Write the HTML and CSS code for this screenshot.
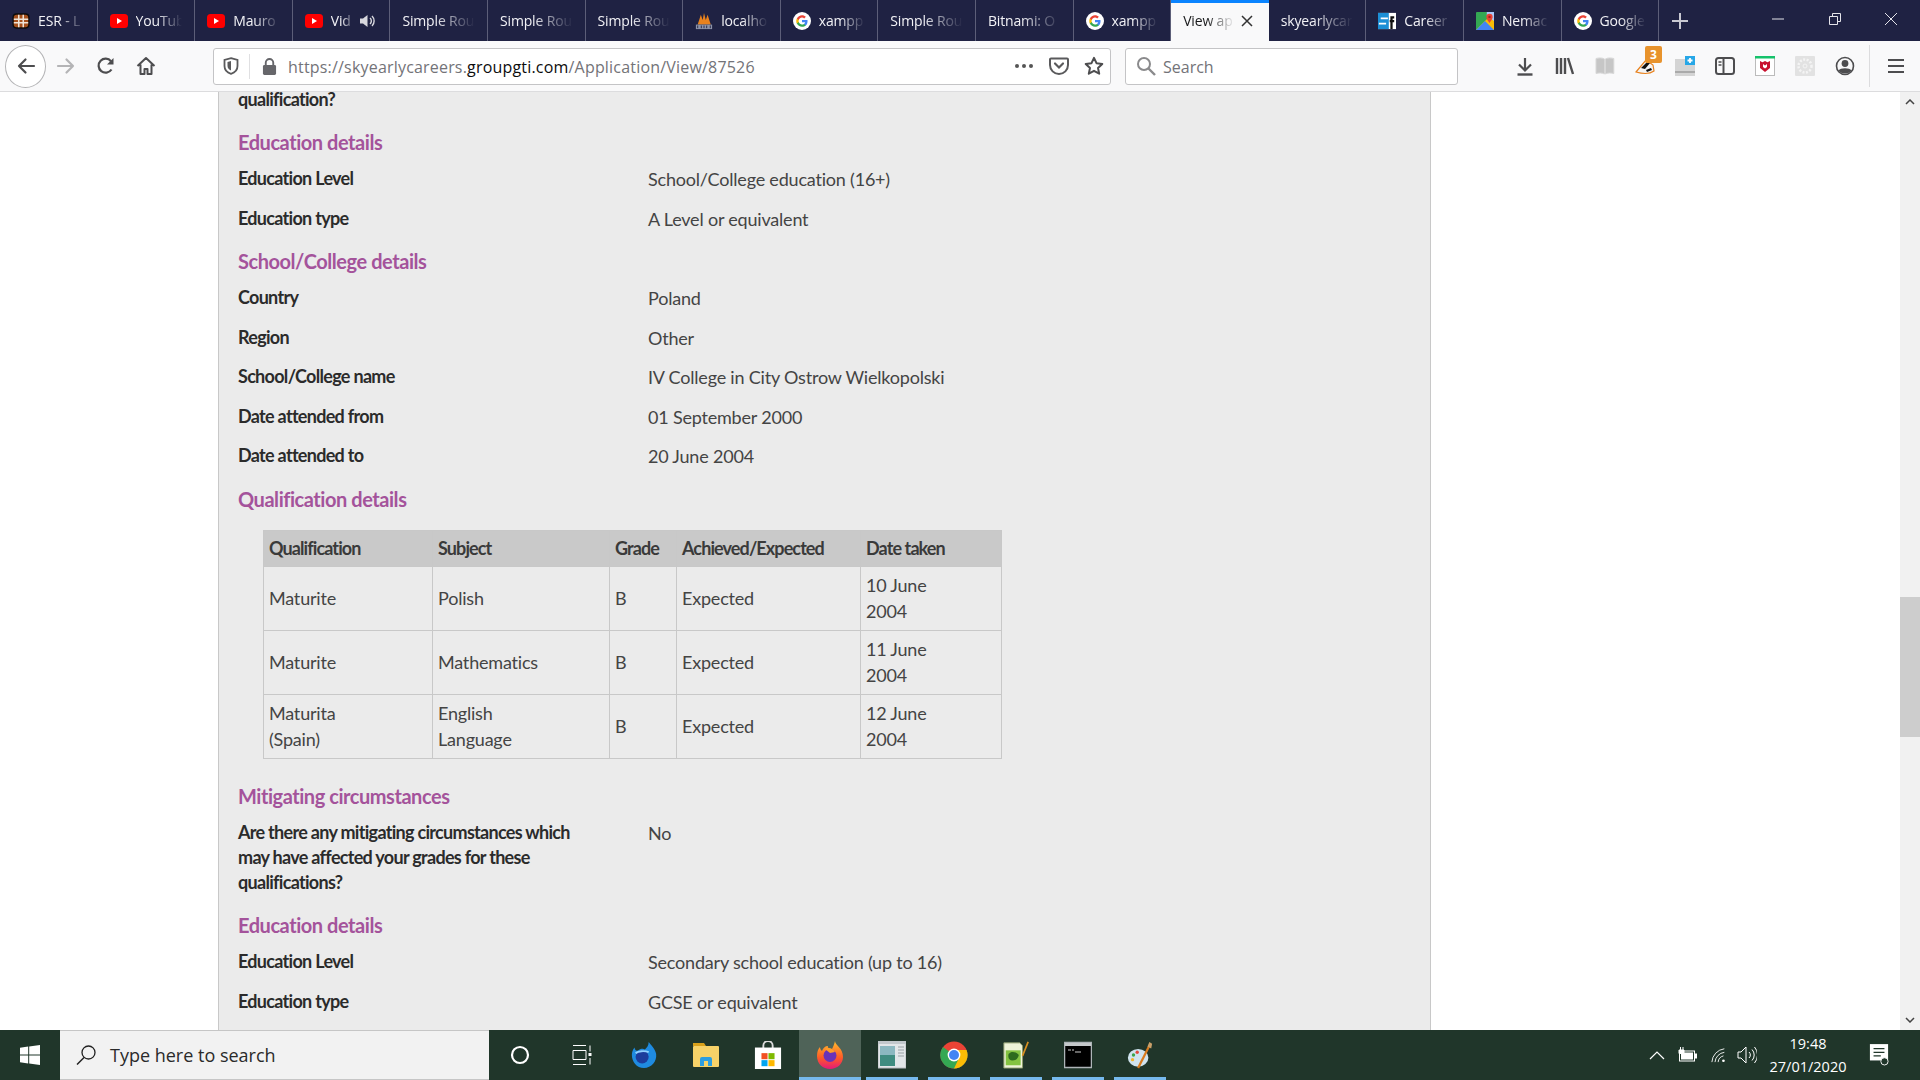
FILE: index.html
```html
<!DOCTYPE html>
<html lang="en">
<head>
<meta charset="utf-8">
<title>View application</title>
<link rel="stylesheet" href="styles.css">
</head>
<body>
<svg class="defs" aria-hidden="true">
  <symbol id="yt" viewBox="0 0 18 16"><rect y="1" width="18" height="14" rx="3.5" fill="#f00"/><path d="M7 5l5 3-5 3z" fill="#fff"/></symbol>
  <symbol id="google" viewBox="0 0 24 24"><circle cx="12" cy="12" r="12" fill="#fff"/><g transform="translate(3.6 3.6) scale(.7)"><path fill="#4285F4" d="M22.56 12.25c0-.78-.07-1.53-.2-2.25H12v4.26h5.92c-.26 1.37-1.04 2.53-2.21 3.31v2.77h3.57c2.08-1.92 3.28-4.74 3.28-8.09z"/><path fill="#34A853" d="M12 23c2.97 0 5.46-.98 7.28-2.66l-3.57-2.77c-.98.66-2.23 1.06-3.71 1.06-2.86 0-5.29-1.93-6.16-4.53H2.18v2.84C3.99 20.53 7.7 23 12 23z"/><path fill="#FBBC05" d="M5.84 14.09c-.22-.66-.35-1.36-.35-2.09s.13-1.43.35-2.09V7.07H2.18C1.43 8.55 1 10.22 1 12s.43 3.45 1.18 4.93l2.85-2.22.81-.62z"/><path fill="#EA4335" d="M12 5.38c1.62 0 3.06.56 4.21 1.64l3.15-3.15C17.45 2.09 14.97 1 12 1 7.7 1 3.99 3.47 2.18 7.07l3.66 2.84c.87-2.6 3.3-4.53 6.16-4.53z"/></g></symbol>
</svg>

<div class="tabbar">
  <div class="tab"><svg class="fav" viewBox="0 0 20 20"><rect x=".5" y="1.500" width="19" height="17" rx="4.500" fill="#0c0c0c"/><rect x="2" y="3" width="16" height="14" rx="3" fill="#a5501c"/><path d="M2 8h16M2 12h16M7.500 3v14M12.500 3v14" stroke="#efe4d6" stroke-width="1.700"/></svg><span class="ttl">ESR - L</span></div>
  <div class="tab"><svg class="fav"><use href="#yt"/></svg><span class="ttl">YouTub</span></div>
  <div class="tab"><svg class="fav"><use href="#yt"/></svg><span class="ttl">Mauro</span></div>
  <div class="tab"><svg class="fav"><use href="#yt"/></svg><span class="ttl">Vid</span><svg class="audio" viewBox="0 0 18 16"><path d="M1 5.5h3L8.5 2v12L4 10.500H1z" fill="#d8d8de"/><path d="M11 5a4 4 0 0 1 0 6M13 3a7 7 0 0 1 0 10" fill="none" stroke="#d8d8de" stroke-width="1.400"/></svg></div>
  <div class="tab"><span class="ttl">Simple Rou</span></div>
  <div class="tab"><span class="ttl">Simple Rou</span></div>
  <div class="tab"><span class="ttl">Simple Rou</span></div>
  <div class="tab"><svg class="fav" viewBox="0 0 20 20"><path d="M3 14L6.500 3l2 6L10 1l2 8 2-6 3.500 11z" fill="#e8821e"/><rect x="1" y="14" width="18" height="5" fill="#8d93a8"/><path d="M3 15v3M7 15v3M10 15v3M13 15v3M17 15v3" stroke="#1f2243"/></svg><span class="ttl">localho</span></div>
  <div class="tab"><svg class="fav"><use href="#google"/></svg><span class="ttl">xampp</span></div>
  <div class="tab"><span class="ttl">Simple Rou</span></div>
  <div class="tab"><span class="ttl">Bitnami: O</span></div>
  <div class="tab"><svg class="fav"><use href="#google"/></svg><span class="ttl">xampp</span></div>
  <div class="tab tab-active"><span class="ttl">View ap</span><svg class="tab-x" viewBox="0 0 12 12"><path d="M1 1l10 10M11 1L1 11" stroke="#333" stroke-width="1.500"/></svg></div>
  <div class="tab"><span class="ttl">skyearlycar</span></div>
  <div class="tab"><svg class="fav" viewBox="0 0 20 20"><rect y="1" width="20" height="18" fill="#fff"/><rect y="1" width="12" height="18" fill="#1c8fd6"/><path d="M3 7h8M1 13h8" stroke="#fff" stroke-width="2"/><path d="M15 19V6h3M13 10h5" stroke="#111" stroke-width="2.500" fill="none"/></svg><span class="ttl">Career</span></div>
  <div class="tab"><svg class="fav" viewBox="0 0 20 20"><rect width="20" height="20" rx="1" fill="#34a853"/><path d="M0 20L20 0v20z" fill="#fbbc04"/><path d="M0 20l10-10 10 10z" fill="#4285f4"/><path d="M12 0h8v10l-8-6z" fill="#a8c7fa"/><path d="M15 2a3.500 3.500 0 0 1 3.500 3.500C18.500 8 15 12 15 12s-3.500-4-3.500-6.500A3.500 3.500 0 0 1 15 2z" fill="#ea4335"/><circle cx="15" cy="5.500" r="1.300" fill="#a5201a"/></svg><span class="ttl">Nemac</span></div>
  <div class="tab"><svg class="fav"><use href="#google"/></svg><span class="ttl">Google</span></div>
  <div class="newtab"><svg viewBox="0 0 18 18"><path d="M9 1v16M1 9h16" stroke="#c8c9d2" stroke-width="2"/></svg></div>
  <div class="winctl">
    <svg viewBox="0 0 14 14"><path d="M1 7h12" stroke="#e4e4ea" stroke-width="1"/></svg>
    <svg viewBox="0 0 14 14"><path d="M1.500 4.500h8v8h-8zM4.500 4V1.500h8v8H10" fill="none" stroke="#e4e4ea"/></svg>
    <svg viewBox="0 0 14 14"><path d="M1 1l12 12M13 1L1 13" stroke="#e4e4ea"/></svg>
  </div>
</div>

<div class="toolbar">
  <div class="back"><svg viewBox="0 0 20 20"><path d="M18 10H3M9.500 3.500L3 10l6.500 6.500" fill="none" stroke="#4d4d4f" stroke-width="2.200" stroke-linecap="round" stroke-linejoin="round"/></svg></div>
  <div class="tbtn"><svg viewBox="0 0 20 20"><path d="M2 10h15M10.500 3.500L17 10l-6.500 6.500" fill="none" stroke="#b4b4b6" stroke-width="2.200" stroke-linecap="round" stroke-linejoin="round"/></svg></div>
  <div class="tbtn"><svg viewBox="0 0 20 20"><path d="M15.500 13.500A7 7 0 1 1 15 5.200" fill="none" stroke="#4d4d4f" stroke-width="2.200"/><path d="M17.500 2v6.500H11z" fill="#4d4d4f"/></svg></div>
  <div class="tbtn"><svg viewBox="0 0 20 20"><path d="M1.500 10L10 2l8.500 8M4.500 8.500V18h4v-5h3v5h4V8.500" fill="none" stroke="#4d4d4f" stroke-width="2" stroke-linejoin="round"/></svg></div>

  <div class="urlbar">
    <svg class="shield" viewBox="0 0 16 18"><path d="M8 1.200l6.500 1.800v6c0 4-3 6.800-6.500 7.800C4.500 15.800 1.500 13 1.500 9V3z" fill="none" stroke="#5a5a5c" stroke-width="1.800"/><path d="M8 4v9.500C6 12.800 4.500 11 4.500 9V5z" fill="#5a5a5c"/></svg>
    <span class="urlsep"></span>
    <svg class="lock" viewBox="0 0 16 20"><path d="M4 9V6a4 4 0 0 1 8 0v3" fill="none" stroke="#66666a" stroke-width="2"/><rect x="1" y="8.500" width="14" height="10.500" rx="1.500" fill="#66666a"/></svg>
    <span class="url">https://skyearlycareers.<b>groupgti.com</b>/Application/View/87526</span>
    <svg class="dots" viewBox="0 0 20 6"><circle cx="3" cy="3" r="2" fill="#555"/><circle cx="10" cy="3" r="2" fill="#555"/><circle cx="17" cy="3" r="2" fill="#555"/></svg>
    <svg class="urlicon" viewBox="0 0 20 20"><path d="M2 2.500h16a1 1 0 0 1 1 1V9a9 9 0 0 1-18 0V3.500a1 1 0 0 1 1-1z" fill="none" stroke="#5a5a5c" stroke-width="2"/><path d="M6 7.500l4 4 4-4" fill="none" stroke="#5a5a5c" stroke-width="2.200" stroke-linecap="round"/></svg>
    <svg class="urlicon star" viewBox="0 0 20 20"><path d="M10 1.800l2.500 5.400 5.800.7-4.300 4 1.200 5.800L10 14.800l-5.200 2.900L6 11.900l-4.300-4 5.800-.7z" fill="none" stroke="#4d4d4f" stroke-width="2" stroke-linejoin="round"/></svg>
  </div>

  <div class="searchbar">
    <svg viewBox="0 0 20 20"><circle cx="8" cy="8" r="6" fill="none" stroke="#8a8a8c" stroke-width="2"/><path d="M12.500 12.500L19 19" stroke="#8a8a8c" stroke-width="2.400"/></svg>
    <span>Search</span>
  </div>

  <div class="tools">
    <div class="tbtn"><svg viewBox="0 0 20 20"><path d="M10 2v12M4 8.500l6 6 6-6" fill="none" stroke="#4d4d4f" stroke-width="2.200"/><path d="M2.500 18.500h15" stroke="#4d4d4f" stroke-width="2.400"/></svg></div>
    <div class="tbtn"><svg viewBox="0 0 20 20"><path d="M2 2v16M6 2v16M10 2v16M13 2l5 16" fill="none" stroke="#4d4d4f" stroke-width="2.400"/></svg></div>
    <div class="tbtn"><svg viewBox="0 0 20 20"><path d="M1 2.500c3-.8 6-.8 8.500.5v15c-2.500-1.300-5.500-1.300-8.500-.5zM18.800 2.500c-3-.8-6-.8-8.500.5v15c2.500-1.300 5.500-1.300 8.500-.5z" fill="#c6c6c6" stroke="#d8d8d8"/></svg></div>
    <div class="tbtn badger"><svg viewBox="0 0 20 20"><path d="M1 16L11 4l7 5 1 6c-4 3-11 3-18 1z" fill="#f4f4f4" stroke="#e8821e" stroke-width="1.200"/><path d="M6 12l7-7 2 2-5 6zM11 14l5-2 1 2-5 2z" fill="#111"/></svg><span class="badge">3</span></div>
    <div class="tbtn"><svg viewBox="0 0 20 20"><rect y="3" width="20" height="17" fill="#d4d4d4"/><rect y="15" width="20" height="2" fill="#aaa"/><rect x="10" y="0" width="10" height="9" fill="#27a7e7"/><path d="M15 2v5M12.500 4.500h5" stroke="#fff" stroke-width="1.800"/></svg></div>
    <div class="tbtn"><svg viewBox="0 0 20 20"><rect x="1" y="2" width="18" height="16" rx="2.500" fill="none" stroke="#4d4d4f" stroke-width="2"/><path d="M8.500 2v16" stroke="#4d4d4f" stroke-width="2"/><path d="M3.500 6h3M3.500 9h3" stroke="#4d4d4f" stroke-width="1.500"/></svg></div>
    <div class="tbtn"><svg viewBox="0 0 20 20"><rect x=".5" y=".5" width="19" height="19" fill="#fff" stroke="#bbb"/><rect width="20" height="2.500" fill="#15c26b"/><path d="M5 5l2.500 1.200L10 5l2.500 1.200L15 5v7l-5 4-5-4z" fill="#c8102e"/><path d="M8 8v3l2 1.500L12 11V8l-2 1.500z" fill="#fff"/></svg></div>
    <div class="tbtn"><svg viewBox="0 0 20 20"><rect width="20" height="20" rx="1" fill="#e2e2e2"/><circle cx="10" cy="10" r="6.500" fill="none" stroke="#f4f4f4" stroke-width="2.500" stroke-dasharray="2 1.500"/><circle cx="10" cy="10" r="2" fill="none" stroke="#f4f4f4"/></svg></div>
    <div class="tbtn"><svg viewBox="0 0 20 20"><circle cx="10" cy="10" r="8.500" fill="none" stroke="#4d4d4f" stroke-width="1.600"/><circle cx="10" cy="7.500" r="3.400" fill="#4d4d4f"/><path d="M3.500 14.500c2-3 11-3 13 0-2 4-11 4-13 0z" fill="#4d4d4f"/></svg></div>
    <span class="toolsep"></span>
    <div class="tbtn burger"><svg viewBox="0 0 16 16"><path d="M0 2h16M0 8h16M0 14h16" stroke="#4d4d4f" stroke-width="2"/></svg></div>
  </div>
</div>

<div class="main">
  <div class="gutter"></div>
  <div class="panel">
    <div class="scrolled">
      <div class="row"><div class="lbl">qualification?</div></div>
      <h3>Education details</h3>
      <div class="row"><div class="lbl">Education Level</div><div class="val">School/College education (16+)</div></div>
      <div class="row"><div class="lbl">Education type</div><div class="val">A Level or equivalent</div></div>
      <h3>School/College details</h3>
      <div class="row"><div class="lbl">Country</div><div class="val">Poland</div></div>
      <div class="row"><div class="lbl">Region</div><div class="val">Other</div></div>
      <div class="row"><div class="lbl">School/College name</div><div class="val">IV College in City Ostrow Wielkopolski</div></div>
      <div class="row"><div class="lbl">Date attended from</div><div class="val">01 September 2000</div></div>
      <div class="row"><div class="lbl">Date attended to</div><div class="val">20 June 2004</div></div>
      <h3>Qualification details</h3>
      <table>
        <colgroup><col class="c1"><col class="c2"><col class="c3"><col class="c4"><col class="c5"></colgroup>
        <thead><tr><th>Qualification</th><th>Subject</th><th>Grade</th><th>Achieved/Expected</th><th>Date taken</th></tr></thead>
        <tbody>
          <tr><td>Maturite</td><td>Polish</td><td>B</td><td>Expected</td><td>10 June<br>2004</td></tr>
          <tr><td>Maturite</td><td>Mathematics</td><td>B</td><td>Expected</td><td>11 June<br>2004</td></tr>
          <tr><td>Maturita<br>(Spain)</td><td>English<br>Language</td><td>B</td><td>Expected</td><td>12 June<br>2004</td></tr>
        </tbody>
      </table>
      <h3>Mitigating circumstances</h3>
      <div class="row"><div class="lbl">Are there any mitigating circumstances which may have affected your grades for these qualifications?</div><div class="val">No</div></div>
      <h3>Education details</h3>
      <div class="row"><div class="lbl">Education Level</div><div class="val">Secondary school education (up to 16)</div></div>
      <div class="row"><div class="lbl">Education type</div><div class="val">GCSE or equivalent</div></div>
    </div>
  </div>
  <div class="rightspace"></div>
  <div class="scrollbar">
    <div class="sbtn"><svg viewBox="0 0 10 6"><path d="M1 5l4-4 4 4" fill="none" stroke="#444" stroke-width="1.500"/></svg></div>
    <div class="strack"><div class="sthumb"></div></div>
    <div class="sbtn"><svg viewBox="0 0 10 6"><path d="M1 1l4 4 4-4" fill="none" stroke="#444" stroke-width="1.500"/></svg></div>
  </div>
</div>

<div class="taskbar">
  <div class="start"><svg viewBox="0 0 20 20"><path d="M0 2.800L8.200 1.600v7.900H0zM9.200 1.500L20 0v9.500H9.200zM0 10.500h8.200v7.900L0 17.200zM9.200 10.500H20V20L9.200 18.500z" fill="#fff"/></svg></div>
  <div class="tsearch">
    <svg viewBox="0 0 20 20"><circle cx="12.500" cy="7.500" r="6.500" fill="none" stroke="#222" stroke-width="1.300"/><path d="M8 12.500L1 19.500" stroke="#222" stroke-width="1.500"/></svg>
    <span>Type here to search</span>
  </div>
  <div class="tk"><svg class="s20" viewBox="0 0 20 20"><circle cx="10" cy="10" r="8" fill="none" stroke="#fff" stroke-width="2.200"/></svg></div>
  <div class="tk"><svg class="s20" viewBox="0 0 20 20"><path d="M1 .5h13M1 19.500h13M1 5.500h13v9H1zM18 .5v6M18 13v6.500" fill="none" stroke="#fff" stroke-width="1"/><rect x="16.500" y="8" width="3" height="3" fill="#fff"/></svg></div>
  <div class="tk"><svg class="s28" viewBox="0 0 28 30"><path d="M19 1c2 3 7 7 8 13 1 8-5 15-13 15S1 22 1 15c0-3 1-6 3-8 0 3 2 4 4 3 3-2 5-2 7-1 2-2 4-4 4-8z" fill="#1f8be0"/><circle cx="12" cy="17" r="7" fill="#1c3c9c"/><path d="M5 13c3-2 9-3 14-1" stroke="#8fd0ff" stroke-width="2" fill="none"/></svg></div>
  <div class="tk"><svg class="s28" viewBox="0 0 28 26"><path d="M1 1h11l2 3H1z" fill="#d9a11b"/><rect x="1" y="4" width="26" height="21" rx="1" fill="#f7d268"/><path d="M8 24v-7a2 2 0 0 1 2-2h8a2 2 0 0 1 2 2v7h-4v-5h-4v5z" fill="#2d9ee0"/></svg></div>
  <div class="tk"><svg class="s28" viewBox="0 0 28 30"><path d="M9 8V5a5 5 0 0 1 10 0v3" fill="none" stroke="#ddd" stroke-width="2"/><rect y="7" width="28" height="23" fill="#fff"/><rect x="7" y="13" width="6.500" height="6.500" fill="#f25022"/><rect x="14.500" y="13" width="6.500" height="6.500" fill="#7fba00"/><rect x="7" y="20.500" width="6.500" height="6.500" fill="#00a4ef"/><rect x="14.500" y="20.500" width="6.500" height="6.500" fill="#ffb900"/></svg></div>
  <div class="tk tk-on tk-open"><svg class="s30" viewBox="0 0 28 30"><defs><linearGradient id="ff" x1="0" y1="0" x2="0" y2="1"><stop offset="0" stop-color="#ffbd2e"/><stop offset=".6" stop-color="#ff5a26"/><stop offset="1" stop-color="#e3197a"/></linearGradient></defs><path d="M19 1c0 4 8 7 8 16 0 7-6 12-13 12S1 24 1 16c0-4 1-7 3-9 0 2 1 3 2 4 1-3 3-5 6-5-1 2 2 3 4 3 1-2 2-4 3-8z" fill="url(#ff)"/><circle cx="14" cy="15.500" r="6.500" fill="#6b33b8"/><path d="M9 9c3-2 8-1 10 3l-5 1z" fill="#ff9d2a"/></svg></div>
  <div class="tk tk-open"><svg class="s28" viewBox="0 0 28 28"><rect width="28" height="27" fill="#e2e6e8" stroke="#b8bcc0"/><rect y="0" width="28" height="3" fill="#c2c8cc"/><rect x="2" y="5" width="15" height="20" fill="#3f8c80"/><path d="M2 5h15v9H2z" fill="#8bb8c0"/><path d="M20 6h6M20 9h6M20 12h6M20 15h6" stroke="#9aa2a6"/></svg></div>
  <div class="tk tk-open"><svg class="s28" viewBox="0 0 28 28"><circle cx="14" cy="14" r="13.500" fill="#ea4335"/><path d="M14 14L2.300 21A13.500 13.500 0 0 1 3 6z" fill="#34a853"/><path d="M2.300 21a13.500 13.500 0 0 0 11.700 6.500C21.500 27.500 27.500 21.500 27.500 14c0-1.800-.3-3.500-1-5H14z" fill="#34a853"/><path d="M14 9h12.500c.7 1.500 1 3.200 1 5 0 7.500-6 13.500-13.500 13.500L19 17z" fill="#fbbc05"/><circle cx="14" cy="14" r="6.400" fill="#fff"/><circle cx="14" cy="14" r="5" fill="#4285f4"/></svg></div>
  <div class="tk tk-open"><svg class="s28" viewBox="0 0 28 30"><path d="M1 2h17l3 3v24H1z" fill="#eef3d8" stroke="#8a9a6a"/><path d="M3 10h16v16H3z" fill="#84c341"/><path d="M6 14c3-4 9-2 11 1-1 4-3 6-7 6-3 0-5-3-4-7z" fill="#2e6b1e"/><path d="M21 16L27 1" stroke="#d89020" stroke-width="1.800"/></svg></div>
  <div class="tk tk-open"><svg class="s28" viewBox="0 0 28 26"><rect x=".5" y=".5" width="27" height="25" fill="#000" stroke="#aeb4b8" stroke-width="1.500"/><rect x="1" y="1" width="26" height="3" fill="#c4c8ca"/><path d="M4 8h3M8 8h2M11 10h6" stroke="#ccc"/></svg></div>
  <div class="tk tk-open"><svg class="s28" viewBox="0 0 28 30"><ellipse cx="12" cy="18" rx="11" ry="9.500" fill="#cfe3ee"/><circle cx="7" cy="15" r="1.800" fill="#3ca34a"/><circle cx="11" cy="12" r="1.800" fill="#e2483c"/><circle cx="6" cy="20" r="1.800" fill="#f2b632"/><path d="M12 29L24 5" stroke="#d87a1e" stroke-width="2.400"/><path d="M22 6l2-5 3 2-1 5z" fill="#c9a06a"/></svg></div>
  <div class="tray">
    <svg class="tr-chev" viewBox="0 0 16 9"><path d="M1 8l7-7 7 7" fill="none" stroke="#fff" stroke-width="1.200"/></svg>
    <svg class="tr-bat" viewBox="0 0 21 16"><path d="M3.500 0v3M6 0v3M2 3h5v3.500H2zM4.500 6.500V9" stroke="#fff" fill="#fff"/><rect x="2.500" y="4" width="15" height="10" fill="none" stroke="#fff"/><rect x="4" y="5.500" width="12" height="7" fill="#fff"/><rect x="18" y="6.500" width="2" height="5" fill="#fff"/></svg>
    <svg class="tr-wifi" viewBox="0 0 18 18"><path d="M1 17A16 16 0 0 1 15 2M4.500 17A12 12 0 0 1 15 6M8 17A8 8 0 0 1 14 10" fill="none" stroke="#fff" stroke-width="1"/><circle cx="14" cy="15.500" r="1.500" fill="#fff"/></svg>
    <svg class="tr-vol" viewBox="0 0 20 20"><path d="M1 7h3l5-5v16l-5-5H1z" fill="none" stroke="#fff"/><path d="M12 7a4 4 0 0 1 0 6M15 4.500a8 8 0 0 1 0 11M17.500 2a12 12 0 0 1 0 16" fill="none" stroke="#fff"/></svg>
    <div class="clock"><span>19:48</span><span>27/01/2020</span></div>
    <svg class="tr-note" viewBox="0 0 22 26"><path d="M1 1h20v18H1z" fill="#fff"/><path d="M5 6h12M5 10h12M5 14h8" stroke="#20362a" stroke-width="1.400"/><circle cx="17" cy="20" r="4" fill="#20362a" stroke="#fff"/></svg>
  </div>
</div>
</body>
</html>
```

FILE: styles.css
```css
* { box-sizing: border-box; }
html, body { margin: 0; height: 100%; overflow: hidden; }
body { display: flex; flex-direction: column; width: 1920px; height: 1080px; font-family: "Lato", "Liberation Sans", sans-serif; background: #fff; }
.defs { width: 0; height: 0; position: absolute; }

/* tabs */
.tabbar { display: flex; height: 41px; flex: none; background: #1f2243; color: #f2f2f6; font-family: "Open Sans", sans-serif; font-size: 14px; letter-spacing: -.15px; }
.tab { width: 97.6px; flex: none; display: flex; align-items: center; padding: 0 12px; gap: 8px; border-right: 1px solid #5c5e78; }
.fav { width: 18px; height: 18px; flex: none; }
.ttl { flex: 1; min-width: 0; white-space: nowrap; overflow: hidden; -webkit-mask-image: linear-gradient(to right, #000 45%, transparent 100%); mask-image: linear-gradient(to right, #000 45%, transparent 100%); }
.audio { width: 18px; height: 16px; flex: none; margin-left: -4px; }
.tab-active { background: #f9f9fa; color: #18191a; border-top: 3px solid #0a84ff; border-right: 0; padding: 0 16px 3px 12px; gap: 6px; }
.tab-x { width: 12px; height: 12px; flex: none; }
.newtab { width: 41px; display: flex; align-items: center; justify-content: center; }
.newtab svg { width: 18px; height: 18px; }
.winctl { margin-left: auto; display: flex; align-items: center; gap: 42.5px; padding-right: 22px; height: 38px; }
.winctl svg { width: 14px; height: 14px; }

/* toolbar */
.toolbar { display: flex; align-items: center; height: 51px; flex: none; padding: 0 0 0 5px; background: #f9f9fa; border-bottom: 1px solid #dcdcde; }
.back { width: 41px; height: 43px; border: 1px solid #b4b4b6; border-radius: 50%; background: #fff; display: flex; align-items: center; justify-content: center; }
.back svg { width: 20px; height: 20px; }
.tbtn { width: 40px; height: 40px; flex: none; display: flex; align-items: center; justify-content: center; position: relative; }
.tbtn svg { width: 20px; height: 20px; }
.urlbar { width: 898px; height: 37px; margin-left: 47px; display: flex; align-items: center; background: #fff; border: 1px solid #c4c4c6; border-radius: 3px; padding-left: 9px; }
.shield { width: 16px; height: 18px; flex: none; }
.urlsep { width: 1px; height: 25px; background: #e0e0e2; margin: 0 12px 0 10px; flex: none; }
.lock { width: 15px; height: 19px; flex: none; }
.url { margin-left: 11px; padding-top: 2px; font-family: "Open Sans", sans-serif; font-size: 16px; letter-spacing: .19px; color: #737378; white-space: nowrap; flex: 1; }
.url b { font-weight: 400; color: #0c0c0d; }
.dots { width: 20px; height: 6px; flex: none; margin-right: 15px; }
.urlicon { width: 20px; height: 20px; flex: none; margin-right: 15px; }
.star { margin-right: 6px; }
.searchbar { width: 333px; height: 37px; margin-left: 14px; display: flex; align-items: center; gap: 7px; background: #fff; border: 1px solid #c4c4c6; border-radius: 3px; padding-left: 10px; font-family: "Open Sans", sans-serif; font-size: 16px; color: #737378; }
.searchbar svg { width: 20px; height: 20px; }
.searchbar span { padding-top: 2px; }
.tools { display: flex; align-items: center; margin-left: 47px; height: 42px; }
.toolsep { width: 1px; height: 42px; background: #dcdcde; margin: 0 6px 0 4px; flex: none; }
.burger { width: 40px; }
.burger svg { width: 16px; height: 16px; }
.badge { position: absolute; left: 20px; top: 0; width: 17px; height: 17px; background: #e8932c; color: #fff; font: bold 12px/17px "Open Sans", sans-serif; text-align: center; border-radius: 2px; }

/* main */
.main { flex: 1; display: flex; min-height: 0; overflow: hidden; }
.gutter { width: 218px; flex: none; }
.panel { width: 1213px; flex: none; background: #ebebeb; border-left: 1px solid #c8c8c8; border-right: 1px solid #c8c8c8; padding-left: 19px; overflow: hidden; }
.scrolled { margin-top: -5.5px; font-size: 18px; line-height: 25px; color: #333; letter-spacing: -.2px; }
.row { display: flex; padding-bottom: 14.5px; }
.lbl { width: 410px; padding-right: 60px; font-weight: 700; color: #2b2b2b; flex: none; letter-spacing: -.7px; }
.val { font-weight: 400; color: #444; margin: 1px 0 -1px; }
h3 { margin: 4px 0 11px; font-size: 20px; line-height: 25px; font-weight: 700; color: #a4539b; letter-spacing: -.45px; }
table { border-collapse: collapse; table-layout: fixed; width: 738px; margin: 18px 0 25px 25px; line-height: 26.5px; }
.c1 { width: 169px; } .c2 { width: 177px; } .c3 { width: 67px; } .c4 { width: 184px; } .c5 { width: 141px; }
th, td { border: 1px solid #c8c8c8; padding: 0 5px; text-align: left; vertical-align: middle; }
th { background: #c9c9c9; font-weight: 700; height: 36px; color: #3a3a3a; letter-spacing: -.9px; }
td { height: 64px; color: #444; }
.rightspace { flex: 1; }
.scrollbar { width: 20px; flex: none; display: flex; flex-direction: column; background: #f1f1f1; }
.sbtn { height: 20px; display: flex; align-items: center; justify-content: center; flex: none; }
.sbtn svg { width: 10px; height: 6px; }
.strack { flex: 1; padding-top: 485px; }
.sthumb { height: 140px; background: #cdcdcd; }

/* taskbar */
.taskbar { display: flex; height: 50px; flex: none; background: #20362a; color: #fff; }
.start { width: 60px; display: flex; align-items: center; justify-content: center; }
.start svg { width: 20px; height: 20px; }
.tsearch { width: 429px; display: flex; align-items: center; gap: 14px; padding-left: 16px; background: #f2f2f2; border-top: 1px solid #c6c6c6; border-bottom: 1px solid #c6c6c6; color: #2a2a2a; font-family: "Open Sans", sans-serif; font-size: 18px; }
.tsearch svg { width: 20px; height: 20px; }
.tk { width: 62px; flex: none; display: flex; align-items: center; justify-content: center; position: relative; }
.tk-on { background: #4f6358; }
.tk-open::after { content: ""; position: absolute; left: 5px; right: 5px; bottom: 0; height: 3px; background: #76b9ed; }
.tk-on::after { left: 0; right: 0; }
.s20 { width: 20px; height: 20px; }
.s28 { width: 28px; height: 28px; }
.s30 { width: 30px; height: 30px; }
.tray { margin-left: auto; display: flex; align-items: center; height: 100%; padding-right: 31px; }
.tray svg { flex: none; }
.tr-chev { width: 16px; height: 9px; }
.tr-bat { width: 21px; height: 16px; margin-left: 12.5px; }
.tr-wifi { width: 16px; height: 16px; margin-left: 13px; }
.tr-vol { width: 20px; height: 20px; margin-left: 10px; }
.clock { width: 96px; margin-left: 3px; display: flex; flex-direction: column; align-items: center; gap: 4px; font-family: "Open Sans", sans-serif; font-size: 14.5px; line-height: 19px; }
.tr-note { width: 20px; height: 24px; margin-left: 13px; }
```
